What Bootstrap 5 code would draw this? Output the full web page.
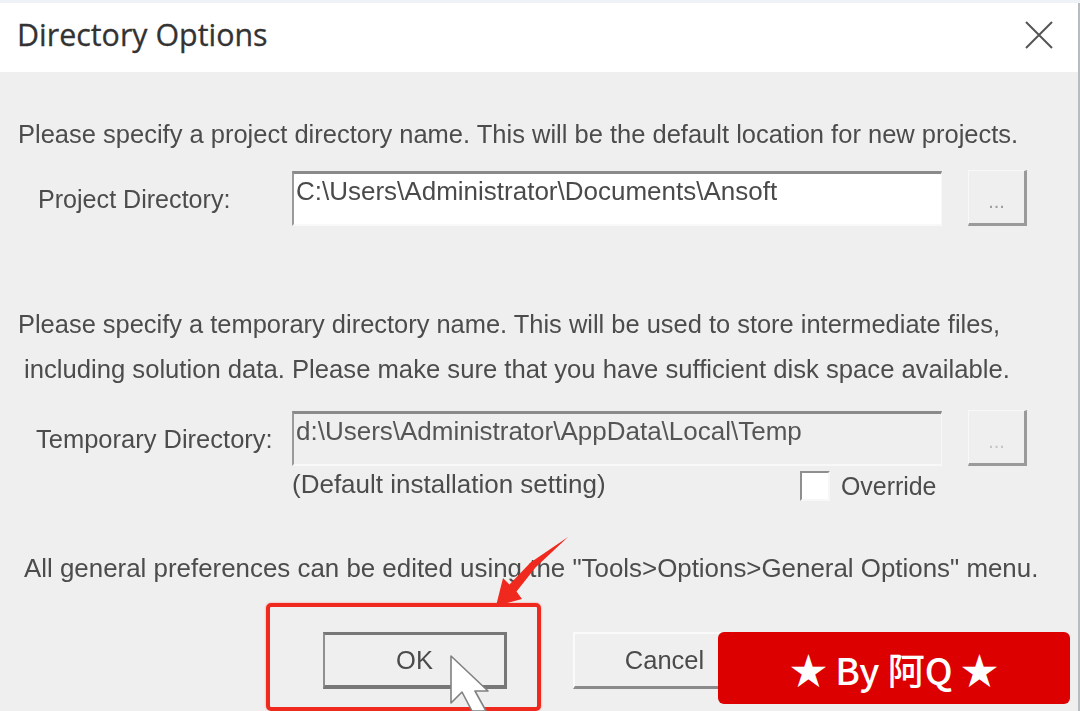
<!DOCTYPE html>
<html lang="en">
<head>
<meta charset="utf-8">
<title>Directory Options</title>
<link rel="stylesheet" href="https://cdn.jsdelivr.net/npm/bootstrap@5.3.0/dist/css/bootstrap.min.css">
<style>
html,body{width:1080px;height:711px;overflow:hidden;margin:0;background:#eff3f8}
body{padding-top:3px;font-family:"Liberation Sans",Arial,sans-serif;color:#4c4c4c}
.dlg-frame{position:relative;height:708px;background:#efefef;border-right:2px solid #b9bcbf;overflow:hidden}
.dlg-blur{filter:blur(.6px)}
.dlg-title{height:69px;background:#fff;padding:0 25px 5px 17px}
.dlg-title h1{font:400 30.4px/1 "Open Sans",sans-serif;color:#333;margin:0;-webkit-text-stroke:.3px #333}
.dlg-body{padding-top:40px;font-size:24.9px}
.line{height:45px;white-space:nowrap}
.ps{padding-left:18px}.ps2{padding-left:24px}
.f1{font-size:25.5px}.f2{font-size:25.45px}.f3{font-size:25.65px}.f4{font-size:25.9px}
.lbl{width:292px;white-space:nowrap;padding-top:3px}
.lbl1{padding-left:38px;font-size:25.1px}.lbl2{padding-left:36px;font-size:25.5px}
.path-in{width:650px;height:55px;border:0;border-top:3px solid #8a8a8a;border-left:2px solid #9a9a9a;border-right:1px solid #f8f8f8;border-bottom:2px solid #f8f8f8;border-radius:0;background:#fff;color:#4a4a4a;font-size:26px;padding:0 0 15px 2px;box-shadow:none}
.path-in[readonly]{background:#fff}
.path-off.path-in[readonly]{background:#efefef;color:#555}
.dots{width:59px;height:56px;margin-left:26px;border:0;border-top:1px solid #f8f8f8;border-left:1px solid #f8f8f8;border-right:3px solid #9a9a9a;border-bottom:3px solid #9a9a9a;border-radius:0;background:#efefef;color:#9b9b9b;font-size:20px;padding:8px 0 0;line-height:1}
.dots-off{color:#c4c4c4}
.gap1{margin-top:13px}.gap2{margin-top:76px}.gap3{margin-top:18px}.gap4{height:32px;margin-top:4px}.gap5{margin-top:44px}.gap6{margin-top:41px}
.note{margin-left:292px;width:508px;position:relative;top:-2px;font-size:26px}
.ck{width:30px;height:30px;background:#fff;border:0;border-top:2px solid #8f8f8f;border-left:2px solid #8f8f8f;border-right:2px solid #f7f7f7;border-bottom:2px solid #f7f7f7}
.ck-l{margin-left:11px;padding-top:2px}
.bar{padding-left:323px}
.act{width:184px;height:57px;border-radius:0;background:#efefef;color:#4b4b4b;font-size:25.5px;padding:0;border:0}
.act-ok{border-top:3px solid #777;border-left:2px solid #8f8f8f;border-right:3px solid #777;border-bottom:4px solid #777;margin-right:66px}
.act-no{width:184px;border-top:2px solid #fafafa;border-left:2px solid #fafafa;border-right:3px solid #8a8a8a;border-bottom:3px solid #8a8a8a}
.hl{position:absolute;left:266px;top:600px;width:275px;height:108px;border:4px solid #f0291e;border-radius:5px;box-shadow:0 0 2px rgba(240,41,30,.55)}
.ov{position:absolute;left:0;top:0}
.stamp{position:absolute;left:718px;top:629px;width:352px;height:72px;border-radius:6px;background:#dc0000;color:#fff;font:500 37px/1 "Noto Sans CJK SC","Liberation Sans",sans-serif;white-space:nowrap;padding-top:2px}
</style>
</head>
<body>
<div class="dlg-frame">
  <div class="dlg-blur">
    <header class="dlg-title d-flex align-items-center justify-content-between">
      <h1>Directory Options</h1>
      <svg width="28" height="28" viewBox="0 0 28 28" aria-label="Close"><path d="M1 1 27 27M27 1 1 27" fill="none" stroke="#555" stroke-width="2"/></svg>
    </header>
    <main class="dlg-body">
      <div class="line ps f1 d-flex align-items-center">Please specify a project directory name. This will be the default location for new projects.</div>
      <div class="d-flex align-items-center gap1">
        <div class="lbl lbl1">Project Directory:</div>
        <input class="form-control path-in" type="text" readonly value="C:\Users\Administrator\Documents\Ansoft">
        <button class="btn dots" type="button">...</button>
      </div>
      <div class="line ps f2 d-flex align-items-center gap2">Please specify a temporary directory name. This will be used to store intermediate files,</div>
      <div class="line ps2 f3 d-flex align-items-center">including solution data. Please make sure that you have sufficient disk space available.</div>
      <div class="d-flex align-items-center gap3">
        <div class="lbl lbl2">Temporary Directory:</div>
        <input class="form-control path-in path-off" type="text" readonly value="d:\Users\Administrator\AppData\Local\Temp">
        <button class="btn dots dots-off" type="button">...</button>
      </div>
      <div class="d-flex align-items-center gap4">
        <div class="note">(Default installation setting)</div>
        <div class="ck"></div>
        <div class="ck-l">Override</div>
      </div>
      <div class="line ps2 f4 d-flex align-items-center gap5">All general preferences can be edited using the "Tools&gt;Options&gt;General Options" menu.</div>
      <div class="bar d-flex gap6">
        <button class="btn act act-ok" type="button">OK</button>
        <button class="btn act act-no" type="button">Cancel</button>
      </div>
    </main>
  </div>
  <div class="hl"></div>
  <svg class="ov" width="1080" height="708" viewBox="0 3 1080 708" aria-hidden="true">
    <path d="M568 537 530.5 562.5 509.5 584.5 503 578 496 606 522 599 516.5 591.5 535.5 567.5Z" fill="#f0291e"/>
    <path d="M451 656V703L462 692 472 711H486L475 691H488Z" fill="#fff" stroke="#808080" stroke-width="1.6" stroke-linejoin="round"/>
  </svg>
  <div class="stamp d-flex align-items-center justify-content-center">★ By 阿Q ★</div>
</div>
</body>
</html>
